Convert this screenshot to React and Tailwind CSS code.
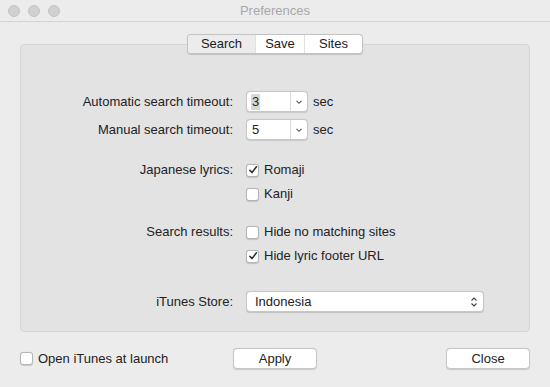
import { useState } from 'react'

const font = { fontFamily: '"Liberation Sans", Arial, sans-serif' }

function Check({ checked, label }) {
	return (
		<div className="flex items-center h-[20px]">
			<div className="w-[13px] h-[13px] rounded-[3px] border border-[#b4b4b4] bg-white shadow-[0_0.5px_1px_rgba(0,0,0,0.15)] flex items-center justify-center">
				{checked && (
					<svg width="10" height="10" viewBox="0 0 10 10">
						<path d="M1.8 5.2 L4 7.6 L8.4 1.8" fill="none" stroke="#2a2a2a" strokeWidth="1.5" strokeLinecap="round" strokeLinejoin="round" />
					</svg>
				)}
			</div>
			<span className="ml-[5px] text-[13px] text-[#222]">{label}</span>
		</div>
	)
}

function Combo({ value, selected }) {
	return (
		<div className="flex items-center">
			<div className="flex h-[21px] w-[62px] bg-white border border-[#c6c6c6] rounded-[4px] shadow-[0_0.5px_1px_rgba(0,0,0,0.12)]">
				<div className="flex-1 flex items-center pl-[4px]">
					<span className={'text-[13px] text-[#222] leading-[16px] px-[1px] ' + (selected ? 'bg-[#d8d8d8]' : '')}>{value}</span>
				</div>
				<div className="w-[17px] border-l border-[#dcdcdc] flex items-center justify-center">
					<svg width="8" height="6" viewBox="0 0 8 6">
						<path d="M1.5 1.8 L4 4.3 L6.5 1.8" fill="none" stroke="#555" strokeWidth="1.1" />
					</svg>
				</div>
			</div>
			<span className="ml-[5px] text-[13px] text-[#222]">sec</span>
		</div>
	)
}

function Row({ label, children, className }) {
	return (
		<div className={'flex items-center ' + (className || '')}>
			<div className="w-[214px] pr-[1px] text-right text-[13px] text-[#222]">{label}</div>
			<div className="ml-[12px]">{children}</div>
		</div>
	)
}

export default function App() {
	const [tab] = useState('Search')
	return (
		<div className="w-[550px] h-[387px] bg-[#ececec] flex flex-col overflow-hidden" style={font}>
			{/* title bar */}
			<div className="h-[22px] flex items-center border-b border-[#d4d4d4] relative">
				<div className="flex gap-[8px] pl-[8px]">
					<div className="w-[12px] h-[12px] rounded-full bg-[#d0d0d0] border border-[#c4c4c4]" />
					<div className="w-[12px] h-[12px] rounded-full bg-[#d0d0d0] border border-[#c4c4c4]" />
					<div className="w-[12px] h-[12px] rounded-full bg-[#d0d0d0] border border-[#c4c4c4]" />
				</div>
				<div className="flex-1 text-center text-[13px] text-[#a8a8a8] -ml-[60px]">Preferences</div>
			</div>

			{/* tabs */}
			<div className="flex justify-center mt-[12px] -mb-[10px] relative z-10">
				<div className="flex h-[20px] bg-white border border-[#c4c4c4] rounded-[4px] shadow-[0_0.5px_1px_rgba(0,0,0,0.15)] text-[13px] text-[#1a1a1a] overflow-hidden">
					{['Search', 'Save', 'Sites'].map((t, i) => (
						<div
							key={t}
							className={'flex items-center justify-center ' + (i > 0 ? 'border-l border-[#e0e0e0] ' : '') + (t === tab ? 'bg-[#ececec] w-[67px]' : i === 1 ? 'w-[49px]' : 'w-[58px]')}
						>
							{t}
						</div>
					))}
				</div>
			</div>

			{/* group box */}
			<div className="mx-[20px] h-[288px] bg-[#e3e3e3] border border-[#d6d6d6] rounded-[4px] flex flex-col pt-[46px]">
				<Row label="Automatic search timeout:" className="-ml-[1px]"><Combo value="3" selected /></Row>
				<Row label="Manual search timeout:" className="mt-[7px] -ml-[1px]"><Combo value="5" /></Row>
				<Row label="Japanese lyrics:" className="mt-[20px] -ml-[1px]"><Check checked label="Romaji" /></Row>
				<Row label="" className="mt-[4px] -ml-[1px]"><Check label="Kanji" /></Row>
				<Row label="Search results:" className="mt-[18px] -ml-[1px]"><Check label="Hide no matching sites" /></Row>
				<Row label="" className="mt-[4px] -ml-[1px]"><Check checked label="Hide lyric footer URL" /></Row>
				<Row label="iTunes Store:" className="mt-[25px] -ml-[1px]">
					<div className="w-[238px] h-[21px] bg-white border border-[#c6c6c6] rounded-[4px] shadow-[0_0.5px_1px_rgba(0,0,0,0.15)] flex items-center pl-[8px] pr-[5px]">
						<span className="flex-1 text-[13px] text-[#222]">Indonesia</span>
						<svg width="8" height="12" viewBox="0 0 8 12">
							<path d="M1.5 4.5 L4 2 L6.5 4.5 M1.5 7.5 L4 10 L6.5 7.5" fill="none" stroke="#444" strokeWidth="1.1" />
						</svg>
					</div>
				</Row>
			</div>

			{/* bottom bar */}
			<div className="flex items-center mt-[16px] pl-[20px] pr-[20px]">
				<div className="w-[200px]"><Check label="Open iTunes at launch" /></div>
				<button className="ml-[13px] w-[84px] h-[21px] bg-white border border-[#c6c6c6] rounded-[4px] shadow-[0_0.5px_1px_rgba(0,0,0,0.15)] text-[13px] text-[#222]">Apply</button>
				<div className="flex-1" />
				<button className="w-[84px] h-[21px] bg-white border border-[#c6c6c6] rounded-[4px] shadow-[0_0.5px_1px_rgba(0,0,0,0.15)] text-[13px] text-[#222]">Close</button>
			</div>
		</div>
	)
}
